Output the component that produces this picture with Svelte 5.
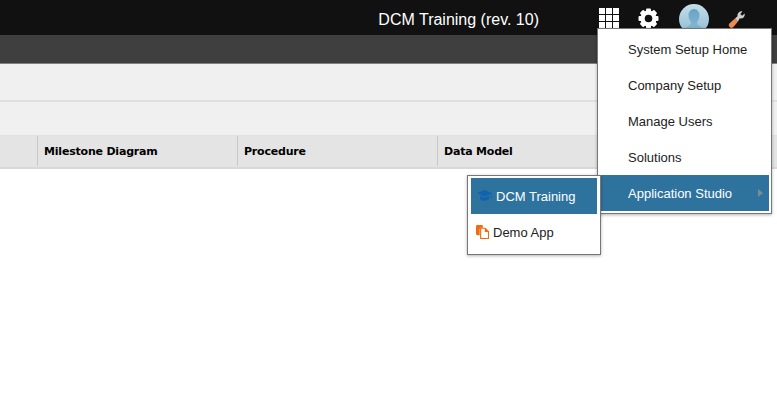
<script>
  const columns = [
    { label: '', width: 38 },
    { label: 'Milestone Diagram', width: 200 },
    { label: 'Procedure', width: 200 },
    { label: 'Data Model', width: 339 }
  ]
  const setupItems = ['System Setup Home', 'Company Setup', 'Manage Users', 'Solutions']
</script>

<div class="page">
  <header class="topbar">
    <span class="title">DCM Training (rev. 10)</span>
    <div class="tools">
      <svg class="grid" width="20" height="20" viewBox="0 0 20 20" fill="#fff">
        {#each [0, 7, 14] as y}
          {#each [0, 7, 14] as x}
            <rect {x} {y} width="6" height="6" />
          {/each}
        {/each}
      </svg>
      <svg class="gear" width="21" height="21" viewBox="0 0 21 21">
        <g fill="#fff">
          {#each [0, 45, 90, 135] as angle}
            <rect x="8" y="0.500" width="5" height="20" rx="1" transform="rotate({angle} 10.500 10.500)" />
          {/each}
        </g>
        <circle cx="10.500" cy="10.500" r="6.500" fill="none" stroke="#fff" stroke-width="3" />
        <circle cx="10.500" cy="10.500" r="3.800" fill="#111" />
      </svg>
      <svg class="avatar" width="30" height="30" viewBox="0 0 30 30">
        <defs>
          <linearGradient id="av" x1="0" y1="0" x2="0" y2="1">
            <stop offset="0" stop-color="#c4dde8" />
            <stop offset="1" stop-color="#8fbdd4" />
          </linearGradient>
          <linearGradient id="pv" x1="0" y1="0" x2="0" y2="1">
            <stop offset="0" stop-color="#68a3c5" />
            <stop offset="1" stop-color="#8fbdd4" />
          </linearGradient>
          <clipPath id="avc"><circle cx="15" cy="15" r="15" /></clipPath>
        </defs>
        <circle cx="15" cy="15" r="15" fill="url(#av)" />
        <g clip-path="url(#avc)" fill="url(#pv)">
          <path d="M15 5c3.500 0 5.500 3 5.500 6.500 0 3-1.200 5.200-2.500 6.500l.5 2.500 5 3.500v6.500H6.500V24l5-3.500.5-2.500c-1.300-1.300-2.500-3.500-2.500-6.500C9.500 8 11.500 5 15 5z" />
        </g>
      </svg>
      <svg class="wrench" width="20" height="20" viewBox="0 0 20 20">
        <path d="M8 9.500 2.400 14.400a2.700 2.700 0 0 0 3.800 3.800L11 12.500z" fill="#ee8a4c" />
        <path d="M8 9.500 10.500 7.300a4.200 4.200 0 0 1 1.200-3.900c1-.9 2.400-1.300 3.700-1l-2.100 2.500 1.800 1.900 2.500-2.200c.4 1.400 0 2.800-1 3.800-1.100 1-2.600 1.300-3.900.9L11 12.500z" fill="#cfcfcf" />
      </svg>
    </div>
  </header>
  <div class="subbar"></div>
  <div class="toolbar first"></div>
  <div class="toolbar second"></div>
  <div class="table-head">
    {#each columns as col}
      <div class="cell" style="width: {col.width}px">{col.label}</div>
    {/each}
  </div>

  <ul class="menu setup">
    {#each setupItems as item}
      <li>{item}</li>
    {/each}
    <li class="active">Application Studio<span class="arrow"></span></li>
  </ul>

  <ul class="menu apps">
    <li class="active">
      <svg width="15" height="12" viewBox="0 0 15 12">
        <path d="M7.500 0 15 3.200 7.500 6.400 0 3.200z" fill="#0f63b0" />
        <path d="M3 5.800v3.200c1.100 1.200 2.900 1.800 4.500 1.800s3.400-.6 4.500-1.800V5.800L7.500 7.700z" fill="#0f63b0" />
        <rect x="13.700" y="3.500" width="0.800" height="5" fill="#0f63b0" />
      </svg>
      DCM Training
    </li>
    <li>
      <svg width="13" height="14" viewBox="0 0 14 15">
        <path d="M0 1.500C0 .7.700 0 1.500 0h4.500c.8 0 1.500.7 1.500 1.500V3H5.500C4.700 3 4 3.700 4 4.500V11H1.500C.7 11 0 10.300 0 9.500z" fill="#f26a0f" />
        <path d="M5 3.500h5l3.500 3.500v7.500H5z" fill="#fff" stroke="#f26a0f" stroke-width="1.200" />
        <path d="M9.500 3.500 13.500 7.500H9.500z" fill="#f26a0f" />
      </svg>
      Demo App
    </li>
  </ul>
</div>

<style>
  :global(body) {
    margin: 0;
    background: #fff;
  }
  .page {
    position: relative;
    height: 419px;
    overflow: hidden;
    font-family: "Liberation Sans", Arial, sans-serif;
  }
  .topbar {
    height: 35px;
    background: #111;
    color: #fff;
    display: flex;
    align-items: center;
    justify-content: flex-end;
  }
  .title {
    font-size: 16px;
    margin-right: 59px;
    position: relative;
    top: 2px;
  }
  .tools {
    display: flex;
    align-items: center;
    width: 179px;
    height: 35px;
    box-sizing: border-box;
    padding-left: 1px;
  }
  .grid { margin-right: 19px; margin-top: 1px; }
  .gear { margin-right: 20px; margin-top: 1px; }
  .avatar { margin-right: 18px; margin-top: 2px; }
  .wrench { margin-top: 2px; }
  .subbar {
    height: 28px;
    background: #3f3f3f;
    border-bottom: 1px solid #808080;
  }
  .toolbar {
    background: #f0f0f0;
    border-bottom: 2px solid #e0e0e0;
  }
  .first { height: 36px; }
  .second { height: 33px; border-bottom-width: 1px; }
  .table-head {
    display: flex;
    height: 31px;
    background: #e4e4e4;
    border-bottom: 2px solid #d8d8d8;
  }
  .cell {
    box-sizing: border-box;
    border-right: 1px solid #c8c8c8;
    padding: 0 6px;
    font: bold 11px/31px "DejaVu Sans", Verdana, sans-serif;
    letter-spacing: -0.2px;
    color: #000;
    margin-bottom: 1px;
  }
  .cell:last-child { border-right: 0; }
  .menu {
    position: absolute;
    list-style: none;
    margin: 0;
    background: #fff;
    border: 1px solid #777;
    box-shadow: 0 1px 3px rgba(0, 0, 0, 0.3);
    box-sizing: border-box;
    font-size: 13px;
    color: #222;
  }
  .setup {
    left: 597px;
    top: 28px;
    width: 175px;
    height: 186px;
    padding: 2px 2px 0 1px;
  }
  .setup li {
    height: 36px;
    line-height: 37px;
    padding-left: 29px;
    position: relative;
  }
  .setup li.active { background: #2e739e; color: #fff; }
  .arrow {
    position: absolute;
    left: 159px;
    top: 14px;
    border-left: 5px solid #7c8a96;
    border-top: 4px solid transparent;
    border-bottom: 4px solid transparent;
  }
  .apps {
    left: 467px;
    top: 175px;
    width: 134px;
    height: 80px;
    padding: 2px 3px 0 3px;
  }
  .apps li {
    height: 36px;
    display: flex;
    align-items: center;
    gap: 4px;
    padding-left: 5px;
  }
  .apps li.active { background: #2e739e; color: #fff; padding-left: 6px; }
</style>
